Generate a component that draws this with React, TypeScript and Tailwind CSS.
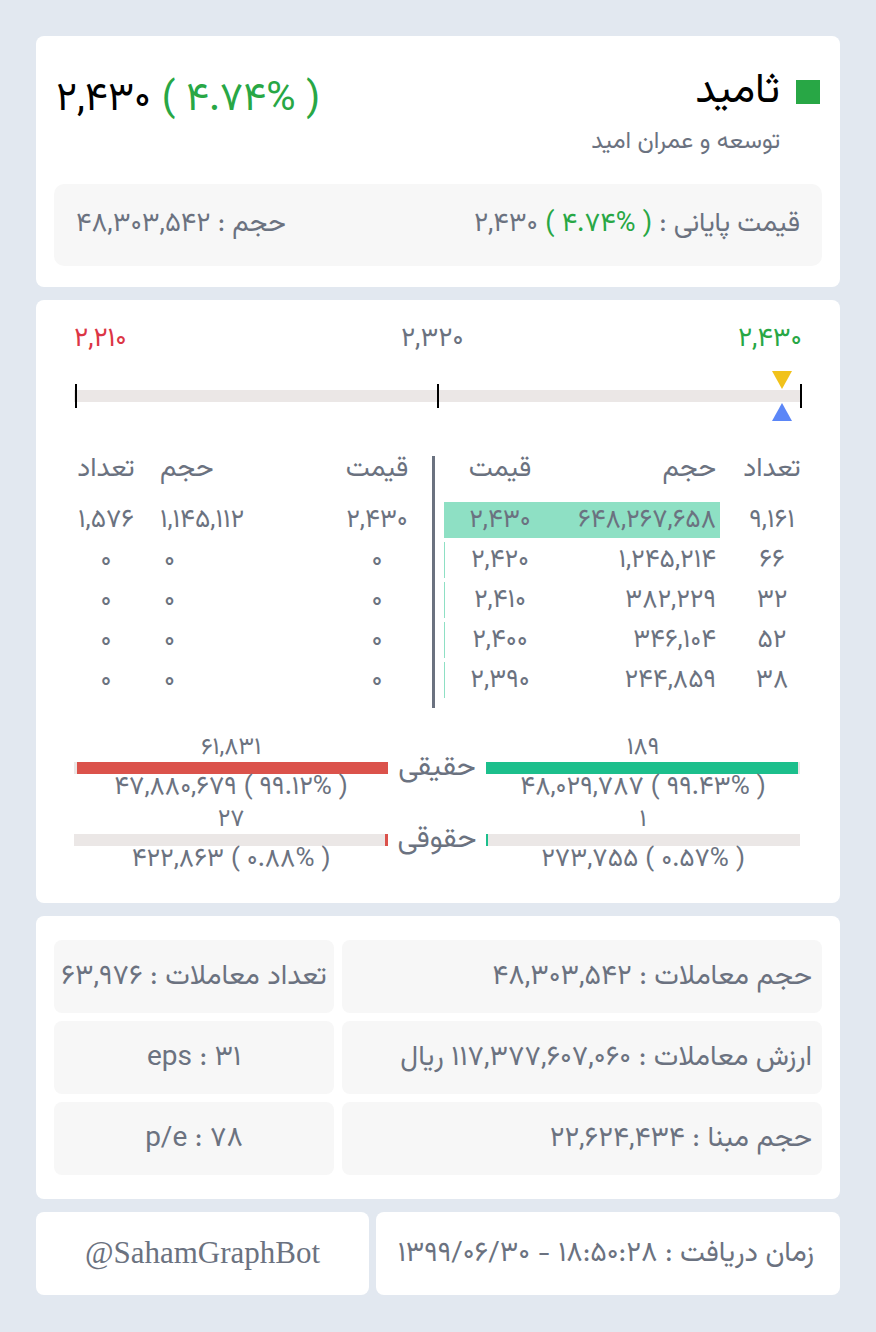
const FONT = "font-['Vazirmatn','DejaVu_Sans','Noto_Sans',sans-serif]";

const buys = [
  { count: '۹,۱۶۱', vol: '۶۴۸,۲۶۷,۶۵۸', price: '۲,۴۳۰', v: 648267658 },
  { count: '۶۶', vol: '۱,۲۴۵,۲۱۴', price: '۲,۴۲۰', v: 1245214 },
  { count: '۳۲', vol: '۳۸۲,۲۲۹', price: '۲,۴۱۰', v: 382229 },
  { count: '۵۲', vol: '۳۴۶,۱۰۴', price: '۲,۴۰۰', v: 346104 },
  { count: '۳۸', vol: '۲۴۴,۸۵۹', price: '۲,۳۹۰', v: 244859 },
];

const sells = [
  { count: '۱,۵۷۶', vol: '۱,۱۴۵,۱۱۲', price: '۲,۴۳۰' },
  { count: '۰', vol: '۰', price: '۰' },
  { count: '۰', vol: '۰', price: '۰' },
  { count: '۰', vol: '۰', price: '۰' },
  { count: '۰', vol: '۰', price: '۰' },
];

const maxVol = Math.max(...buys.map((b) => b.v));

function SideBar({ count, value, pct, color, anchor }: { count: string; value: string; pct: number; color: string; anchor: 'left' | 'right' }) {
  return (
    <div className="w-[314px] flex flex-col items-center">
      <div className="h-7 leading-7 text-[24px]">{count}</div>
      <div className={`h-3 w-full bg-[#ebe7e6] flex ${anchor === 'right' ? 'justify-end' : 'justify-start'}`}>
        <div className="h-full" style={{ width: `${pct}%`, backgroundColor: color }} />
      </div>
      <div dir="ltr" className="h-7 leading-7 text-[26px]">{value}</div>
    </div>
  );
}

export default function App() {
  return (
    <div dir="rtl" className={`min-h-screen bg-[#e2e8f0] p-9 text-[#6b7280] ${FONT}`}>
      <div className="flex flex-col gap-[13px]">
        {/* Symbol header */}
        <section className="h-[251px] rounded-lg bg-white">
          <div className="h-[148px] flex justify-between items-start px-5">
            <div>
              <div className="mt-9 h-10 flex items-center gap-4">
                <span className="w-6 h-6 bg-[#28a745]" />
                <h1 className="text-[42px] leading-none text-black">ثامید</h1>
              </div>
              <div className="mt-4 pr-10 text-[24px] leading-7">توسعه و عمران امید</div>
            </div>
            <div dir="ltr" className="mt-11 text-[40px] leading-10 text-black">
              ۲,۴۳۰ <span className="text-[#28a745]">( ۴.۷۴% )</span>
            </div>
          </div>
          <div className="mx-[18px] h-[82px] rounded-[10px] bg-[#f7f7f7] px-[22px] flex items-center justify-between text-[27px]">
            <div>
              قیمت پایانی : <bdi dir="ltr" className="text-[#28a745]">( ۴.۷۴% )</bdi> ۲,۴۳۰
            </div>
            <div>حجم : ۴۸,۳۰۳,۵۴۲</div>
          </div>
        </section>

        {/* Range + order book + traders */}
        <section dir="ltr" className="h-[603px] rounded-lg bg-white px-[38px] pt-[26px]">
          <div className="flex justify-between items-center h-7 text-[27px]">
            <span className="text-[#dc3545]">۲,۲۱۰</span>
            <span>۲,۳۲۰</span>
            <span className="text-[#28a745]">۲,۴۳۰</span>
          </div>
          <div className="relative mt-[30px] h-6">
            <div className="absolute inset-x-0 top-[6px] h-3 bg-[#ebe7e6]" />
            <span className="absolute left-px top-0 h-6 w-[2px] bg-black" />
            <span className="absolute left-[363px] top-0 h-6 w-[2px] bg-black" />
            <span className="absolute right-0 top-0 h-6 w-[2px] bg-black" />
            <svg className="absolute right-[10px] -top-[13px]" width="20" height="18" viewBox="0 0 20 18">
              <polygon points="0,0 20,0 10,18" fill="#f1c21b" />
            </svg>
            <svg className="absolute right-[10px] top-[19px]" width="20" height="18" viewBox="0 0 20 18">
              <polygon points="10,0 20,18 0,18" fill="#5b86f7" />
            </svg>
          </div>

          {/* order book */}
          <div className="mt-12 flex h-[252px] text-[26px]">
            <div className="w-[348px] ml-[2px]">
              <div className="h-7 flex items-center text-[27px]">
                <span className="w-[60px] text-center">تعداد</span>
                <span className="w-[110px] ml-6 text-left">حجم</span>
                <span className="flex-1" />
                <span className="w-[94px] text-center">قیمت</span>
              </div>
              <div className="mt-4">
                {sells.map((s, i) => (
                  <div key={i} className="h-10 flex items-center">
                    <span className="w-[60px] text-center">{s.count}</span>
                    <span className={`w-[110px] ml-6 ${s.vol === '۰' ? 'pl-1' : ''} text-left`}>{s.vol}</span>
                    <span className="flex-1" />
                    <span className="w-[94px] text-center">{s.price}</span>
                  </div>
                ))}
              </div>
            </div>
            <div className="ml-2 w-[3px] bg-[#6b7280]" />
            <div className="ml-[9px] w-[358px]">
              <div className="h-7 flex items-center text-[27px]">
                <span className="w-[112px] text-center">قیمت</span>
                <span className="w-[164px] text-right pr-1">حجم</span>
                <span className="w-[60px] ml-[22px] text-center">تعداد</span>
              </div>
              <div className="mt-4">
                {buys.map((b, i) => (
                  <div key={i} className="h-10 flex items-center">
                    <div className="relative w-[276px] h-9 flex items-center">
                      <div className="absolute left-0 inset-y-0 bg-[#8ee0c4]" style={{ width: `${(b.v / maxVol) * 100}%` }} />
                      <span className="relative w-[112px] text-center">{b.price}</span>
                      <span className="relative w-[164px] text-right pr-1">{b.vol}</span>
                    </div>
                    <span className="w-[60px] ml-[22px] text-center">{b.count}</span>
                  </div>
                ))}
              </div>
            </div>
          </div>

          {/* real / legal traders */}
          <div className="mt-[26px] flex flex-col gap-[4px]">
            <div className="flex items-center">
              <SideBar count="۶۱,۸۳۱" value="۴۷,۸۸۰,۶۷۹ ( ۹۹.۱۲% )" pct={99.12} color="#db524b" anchor="right" />
              <span dir="rtl" className="w-[98px] text-center text-[29px] mt-[2px]">حقیقی</span>
              <SideBar count="۱۸۹" value="۴۸,۰۲۹,۷۸۷ ( ۹۹.۴۳% )" pct={99.43} color="#1cbf8c" anchor="left" />
            </div>
            <div className="flex items-center">
              <SideBar count="۲۷" value="۴۲۲,۸۶۳ ( ۰.۸۸% )" pct={0.88} color="#db524b" anchor="right" />
              <span dir="rtl" className="w-[98px] text-center text-[29px] mt-[2px]">حقوقی</span>
              <SideBar count="۱" value="۲۷۳,۷۵۵ ( ۰.۵۷% )" pct={0.57} color="#1cbf8c" anchor="left" />
            </div>
          </div>
        </section>

        {/* stats */}
        <section className="h-[283px] rounded-lg bg-white px-[18px] py-6">
          <div className="grid grid-cols-[1fr_280px] gap-2 text-[28px]">
            {[
              ['حجم معاملات : ۴۸,۳۰۳,۵۴۲', 'تعداد معاملات : ۶۳,۹۷۶'],
              ['ارزش معاملات : ۱۱۷,۳۷۷,۶۰۷,۰۶۰ ریال', 'eps : ۳۱'],
              ['حجم مبنا : ۲۲,۶۲۴,۴۳۴', 'p/e : ۷۸'],
            ].map(([a, b], i) => (
              <div key={i} className="contents">
                <div className="h-[73px] rounded-lg bg-[#f7f7f7] px-[10px] flex items-center whitespace-nowrap">{a}</div>
                <div className="h-[73px] rounded-lg bg-[#f7f7f7] px-1 flex items-center justify-center whitespace-nowrap">{b}</div>
              </div>
            ))}
          </div>
        </section>

        {/* footer */}
        <div className="flex gap-[7px] h-[83px]">
          <div className="w-[464px] rounded-lg bg-white flex items-center px-[26px] text-[28px] whitespace-nowrap">
            زمان دریافت : ۱۸:۵۰:۲۸ - ۱۳۹۹/۰۶/۳۰
          </div>
          <div dir="ltr" className="flex-1 rounded-lg bg-white flex items-center justify-center font-['Liberation_Serif',serif] text-[31px]">
            @SahamGraphBot
          </div>
        </div>
      </div>
    </div>
  );
}
